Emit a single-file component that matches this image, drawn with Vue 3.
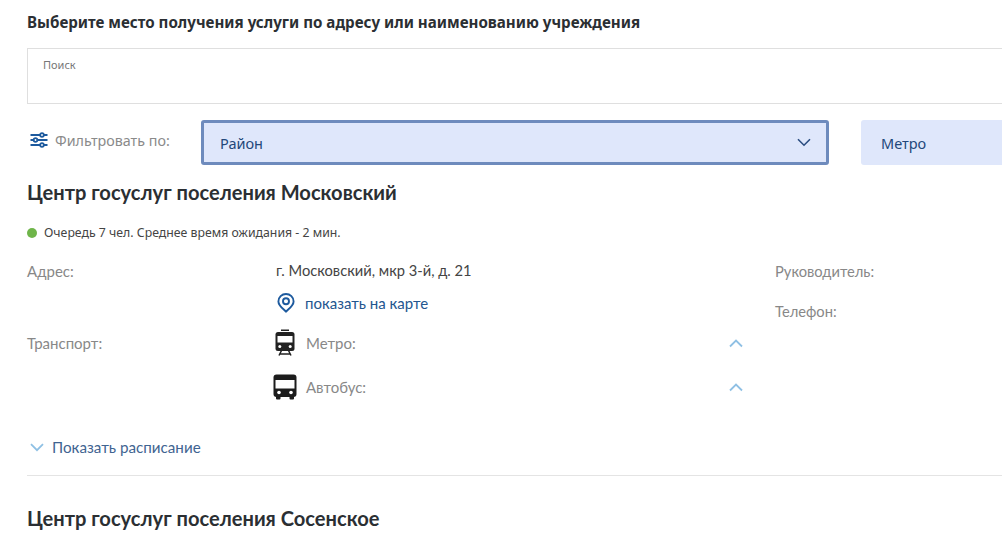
<template>
  <div class="page">
    <h2 class="title">Выберите место получения услуги по адресу или наименованию учреждения</h2>

    <div class="search">
      <span class="search-label">Поиск</span>
    </div>

    <div class="filters">
      <div class="filter-label">
        <svg class="filter-icon" width="18" height="16" viewBox="0 0 18 16" fill="none">
          <path d="M0.500 3h17M0.500 8h17M0.500 13h17" stroke="#1d5a9e" stroke-width="1.800" />
          <circle cx="12" cy="3" r="1.800" fill="#fff" stroke="#1d5a9e" stroke-width="1.800" />
          <circle cx="5.500" cy="8" r="1.800" fill="#fff" stroke="#1d5a9e" stroke-width="1.800" />
          <circle cx="12" cy="13" r="1.800" fill="#fff" stroke="#1d5a9e" stroke-width="1.800" />
        </svg>
        <span>Фильтровать по:</span>
      </div>
      <div class="select select-active">
        <span>Район</span>
        <svg width="14" height="9" viewBox="0 0 14 9" fill="none">
          <path d="M1 1.200l6 6 6-6" stroke="#2a4d80" stroke-width="1.600" />
        </svg>
      </div>
      <div class="select select-plain">
        <span>Метро</span>
      </div>
    </div>

    <section class="center">
      <h3 class="center-name">Центр госуслуг поселения Московский</h3>
      <div class="queue">
        <i class="dot"></i>
        <span>Очередь 7 чел. Среднее время ожидания - 2 мин.</span>
      </div>

      <div class="info">
        <div class="info-main">
          <div class="info-row">
            <div class="key key-address">Адрес:</div>
            <div class="val">
              <div class="address">г. Московский, мкр 3-й, д. 21</div>
              <a class="map-link">
                <svg width="18" height="20" viewBox="0 0 18 20" fill="none">
                  <path d="M9 18.600C6.600 16.200 1.400 12.600 1.400 8.400a7.600 7.400 0 0 1 15.200 0c0 4.200-5.200 7.800-7.600 10.200z" stroke="#1d5a9e" stroke-width="1.900" />
                  <circle cx="9" cy="8.300" r="3" stroke="#1d5a9e" stroke-width="1.900" />
                </svg>
                <span>показать на карте</span>
              </a>
            </div>
          </div>

          <div class="info-row transport">
            <div class="key">Транспорт:</div>
            <div class="val">
              <div class="transport-row">
                <svg class="t-icon" width="24" height="27" viewBox="0 0 24 27">
                  <path d="M8 0.500h8v1.500H8z" fill="#222" />
                  <rect x="2.500" y="3" width="19" height="19" rx="2.500" fill="#222" />
                  <rect x="4.500" y="7" width="15" height="6.500" fill="#fff" />
                  <circle cx="6.800" cy="17.500" r="1.500" fill="#fff" />
                  <circle cx="17.200" cy="17.500" r="1.500" fill="#fff" />
                  <path d="M8.500 21.500L6 26.500M15.500 21.500L18 26.500M7 25h10" stroke="#222" stroke-width="1.500" fill="none" />
                </svg>
                <span class="t-name">Метро:</span>
                <svg class="chev" width="14" height="9" viewBox="0 0 14 9" fill="none">
                  <path d="M1 7.500l6-6 6 6" stroke="#8fc0e4" stroke-width="1.800" />
                </svg>
              </div>
              <div class="transport-row">
                <svg class="t-icon" width="24" height="26" viewBox="0 0 24 26">
                  <rect x="0.500" y="0.500" width="23" height="22.500" rx="3" fill="#1c1c1c" />
                  <rect x="2.500" y="6" width="19" height="8.500" fill="#fff" />
                  <circle cx="6" cy="18.500" r="1.800" fill="#fff" />
                  <circle cx="18" cy="18.500" r="1.800" fill="#fff" />
                  <rect x="3" y="22" width="4.500" height="3.500" rx="1" fill="#1c1c1c" />
                  <rect x="16.500" y="22" width="4.500" height="3.500" rx="1" fill="#1c1c1c" />
                </svg>
                <span class="t-name">Автобус:</span>
                <svg class="chev" width="14" height="9" viewBox="0 0 14 9" fill="none">
                  <path d="M1 7.500l6-6 6 6" stroke="#8fc0e4" stroke-width="1.800" />
                </svg>
              </div>
            </div>
          </div>
        </div>

        <div class="info-side">
          <div class="key side-key">Руководитель:</div>
          <div class="key side-key">Телефон:</div>
        </div>
      </div>

      <a class="schedule">
        <svg width="14" height="9" viewBox="0 0 14 9" fill="none">
          <path d="M1 1.200l6 6 6-6" stroke="#8fc0e4" stroke-width="1.800" />
        </svg>
        <span>Показать расписание</span>
      </a>
    </section>

    <section class="center next">
      <h3 class="center-name">Центр госуслуг поселения Сосенское</h3>
    </section>
  </div>
</template>

<script setup>
</script>

<style>
html,
body {
  margin: 0;
  overflow: hidden;
  background: #fff;
}
</style>

<style scoped>
.page {
  width: 1002px;
  height: 547px;
  overflow: hidden;
  box-sizing: border-box;
  padding: 12px 0 0 27px;
  font-family: Lato, "Noto Sans", sans-serif;
  color: #333;
}

.title {
  margin: 0;
  font-family: "Noto Sans", sans-serif;
  font-size: 15.150px;
  line-height: 20px;
  font-weight: 700;
  white-space: nowrap;
  color: #2b2f33;
}

.search {
  width: 1200px;
  height: 34px;
  margin-top: 16px;
  border: 1px solid #dfdfdf;
  padding: 9px 15px 11px;
}

.search-label {
  display: block;
  font-family: "Noto Sans", sans-serif;
  font-size: 11px;
  line-height: 14px;
  color: #777;
}

.filters {
  display: flex;
  align-items: center;
  width: 1200px;
  margin-top: 16px;
}

.filter-label {
  display: flex;
  align-items: center;
  gap: 7px;
  width: 174px;
  padding: 0 0 5px 3px;
  box-sizing: border-box;
  font-family: "Noto Sans", sans-serif;
  font-size: 14.300px;
  color: #8a8a8a;
}

.select {
  display: flex;
  align-items: center;
  justify-content: space-between;
  height: 45px;
  box-sizing: border-box;
  background: #dfe7fb;
  border-radius: 3px;
  font-family: "Noto Sans", sans-serif;
  font-size: 14.500px;
  color: #23487a;
}

.select-active {
  width: 628px;
  border: 3px solid #6e8bbd;
  padding: 0 15px 0 16px;
}

.select-plain {
  width: 300px;
  margin-left: 32px;
  padding: 0 20px;
}

.center {
  margin-top: 14px;
}

.center-name {
  margin: 0;
  font-size: 20.100px;
  line-height: 26px;
  font-weight: 700;
  color: #2b2f33;
}

.queue {
  display: flex;
  align-items: center;
  gap: 7px;
  margin-top: 19px;
  font-family: "Noto Sans", sans-serif;
  font-size: 12.300px;
  line-height: 18px;
  color: #444;
}

.dot {
  width: 10px;
  height: 10px;
  border-radius: 50%;
  background: #6fb54a;
}

.info {
  display: flex;
  width: 1200px;
  margin-top: 18px;
}

.info-main {
  width: 748px;
  flex-shrink: 0;
}

.info-row {
  display: flex;
}

.key {
  width: 248px;
  flex-shrink: 0;
  font-size: 15px;
  line-height: 20px;
  color: #888;
}

.key-address {
  padding-top: 1px;
}

.side-key {
  font-size: 14.700px;
}

.val {
  flex: 1;
  padding-right: 32px;
  font-size: 15px;
  line-height: 20px;
}

.address {
  padding-left: 1px;
  font-size: 14.700px;
  color: #444;
}

.map-link {
  display: flex;
  align-items: center;
  gap: 10px;
  margin-top: 13px;
  padding-left: 2px;
  color: #23568f;
}

.transport {
  margin-top: 16px;
}

.transport .key {
  padding-top: 4px;
}

.transport-row {
  display: flex;
  align-items: center;
  height: 27px;
  margin-bottom: 17px;
  color: #888;
}

.t-icon {
  width: 24px;
  flex-shrink: 0;
  margin-left: -2px;
}

.t-name {
  flex: 1;
  margin-left: 9px;
}

.chev {
  margin-top: 1px;
}

.info-side {
  display: flex;
  flex-direction: column;
  gap: 20px;
  padding-top: 1px;
}

.schedule {
  display: flex;
  align-items: center;
  gap: 8px;
  margin-top: 20px;
  padding-left: 3px;
  font-size: 15.200px;
  line-height: 20px;
  color: #3f6491;
}

.next {
  margin-top: 18px;
  padding-top: 29px;
  width: 1200px;
  border-top: 1px solid #e4e4e4;
}
</style>
